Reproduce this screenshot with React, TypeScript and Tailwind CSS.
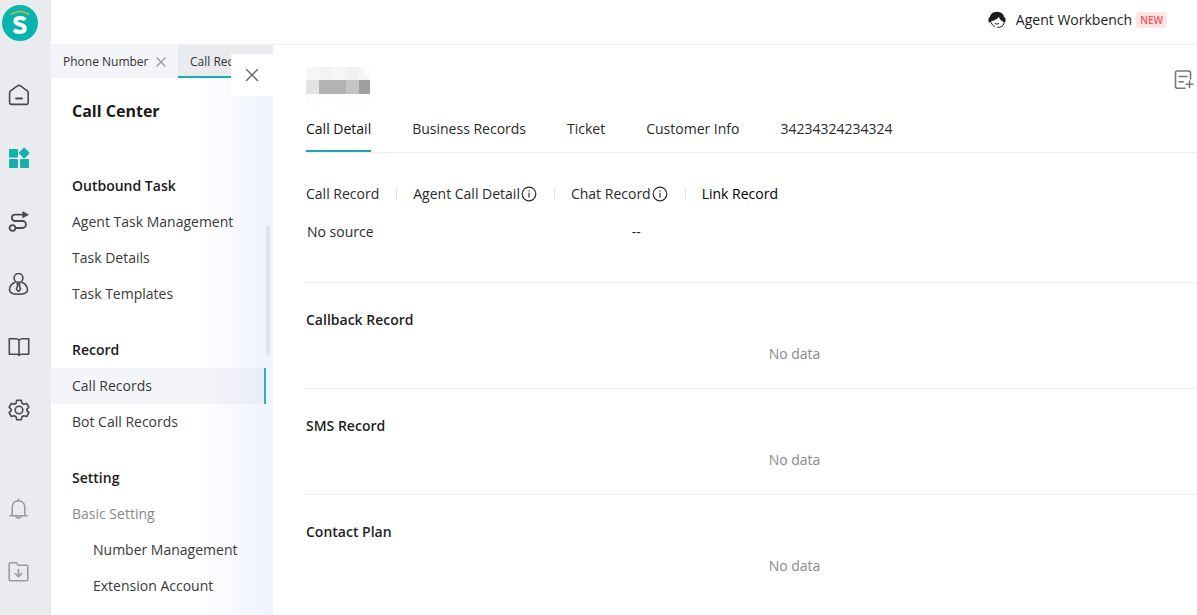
import type { ReactNode } from 'react';
import { X } from 'lucide-react';

const MENU = [
  {
    title: 'Outbound Task',
    items: [{ label: 'Agent Task Management' }, { label: 'Task Details' }, { label: 'Task Templates' }],
  },
  {
    title: 'Record',
    items: [{ label: 'Call Records', active: true }, { label: 'Bot Call Records' }],
  },
  {
    title: 'Setting',
    items: [
      { label: 'Basic Setting', muted: true },
      { label: 'Number Management', nested: true },
      { label: 'Extension Account', nested: true },
    ],
  },
] as { title: string; items: { label: string; active?: boolean; muted?: boolean; nested?: boolean }[] }[];

const TABS = ['Call Detail', 'Business Records', 'Ticket', 'Customer Info', '34234324234324'];

const RECORD_TABS = [
  { label: 'Call Record' },
  { label: 'Agent Call Detail', info: true },
  { label: 'Chat Record', info: true },
  { label: 'Link Record', active: true },
];

const SECTIONS = ['Callback Record', 'SMS Record', 'Contact Plan'];

const Logo = () => (
  <svg width="36" height="36" viewBox="0 0 36 36" aria-hidden="true">
    <circle cx="18" cy="18" r="18" fill="#08b3b0" />
    <path d="M9 9.3Q18 3.500 27 9.3" fill="none" stroke="#a9bf3f" strokeWidth="1.600" strokeLinecap="round" />
    <path
      d="M23.2 14.800C22 13.600 20.200 13 18.200 13C15.500 13 13.400 14 13.400 16.300C13.400 20.600 22.800 18.400 22.800 23.300C22.800 25.800 20.600 27 17.800 27C15.300 27 13.300 26.300 12 25"
      fill="none"
      stroke="#fff"
      strokeWidth="4"
    />
  </svg>
);

const Glyph = ({ children }: { children: ReactNode }) => (
  <svg
    width="22"
    height="22"
    viewBox="0 0 22 22"
    fill="none"
    stroke="currentColor"
    strokeWidth="1.6"
    strokeLinejoin="round"
    strokeLinecap="round"
    aria-hidden="true"
  >
    {children}
  </svg>
);

const HomeIcon = () => (
  <Glyph>
    <path d="M1.600 9Q1.600 7.700 2.600 6.900L9.400 1.900Q11 .9 12.600 1.900L19.200 6.900Q20.200 7.700 20.200 9V18.400Q20.200 20.400 18.200 20.400H3.600Q1.600 20.400 1.600 18.400Z" />
    <path d="M8 14.500H14" strokeWidth="1.800" />
  </Glyph>
);

const AppsIcon = () => (
  <Glyph>
    <g fill="currentColor" stroke="none">
      <rect x="1" y="2" width="9" height="8.500" rx="1" />
      <rect x="1" y="12" width="9" height="9" rx="1" />
      <rect x="12" y="12" width="9" height="9" rx="1" />
      <rect x="12.200" y="2" width="8" height="8" rx="1" transform="rotate(45 16.200 6)" />
    </g>
  </Glyph>
);

const RouteIcon = () => (
  <Glyph>
    <path d="M14 4.700H6.500A3.200 3.200 0 0 0 6.500 11H14.500A3.500 3.500 0 0 1 14.500 18H8.300" strokeWidth="1.800" />
    <circle cx="4.500" cy="18" r="2.900" strokeWidth="1.800" />
    <path d="M15 1.800L20.400 4.700L15 7.600Z" fill="currentColor" strokeWidth=".8" />
  </Glyph>
);

const AgentIcon = () => (
  <Glyph>
    <circle cx="10.500" cy="4.900" r="4.400" />
    <path d="M7 9.300C3.500 11 1.500 14.500 1.500 17C1.500 20 5 21.200 10.500 21.200S19.500 20 19.500 17C19.500 14.500 17.500 11 14 9.300" />
    <path d="M9.200 10.500H11.800L11.300 12.500L12.600 16L10.500 18.500L8.400 16L9.700 12.500Z" />
  </Glyph>
);

const BookIcon = () => (
  <Glyph>
    <path d="M11 4.200C10.200 3.200 9 2.800 7.500 2.800H1.300V18.200H8.500C9.700 18.200 10.500 18.600 11 19.300C11.500 18.600 12.300 18.200 13.500 18.200H20.700V2.800H14.500C13 2.800 11.800 3.200 11 4.200ZM11 4.200V19" />
  </Glyph>
);

const GearIcon = () => (
  <Glyph>
    <path d="M8.800 1.300H13.200L14 4.200L15.800 5.300L18.700 4.500L20.900 8.300L18.800 10.400V11.700L20.900 13.700L18.700 17.500L15.800 16.700L14 17.800L13.200 20.700H8.800L8 17.800L6.200 16.700L3.300 17.500L1.100 13.700L3.200 11.700V10.400L1.100 8.300L3.300 4.500L6.200 5.300L8 4.200Z" />
    <circle cx="11" cy="11" r="3.800" />
  </Glyph>
);

const BellIcon = () => (
  <Glyph>
    <path d="M10.500 1V2.500M4.200 17.500V9A6.300 6.300 0 0 1 16.800 9V17.500M1.800 17.700H19.200M7.800 18.300Q10.500 22 13.200 18.300" />
  </Glyph>
);

const FolderIcon = () => (
  <Glyph>
    <path d="M1.200 3Q1.200 1.800 2.400 1.800H8.500L10.300 4.300H18.600Q19.800 4.300 19.800 5.500V18.500Q19.800 19.700 18.600 19.700H2.400Q1.200 19.700 1.200 18.500Z" />
    <path d="M10.500 8.500V15.500M7.300 12.500L10.500 15.600L13.700 12.500" />
  </Glyph>
);

const NoteIcon = () => (
  <Glyph>
    <path d="M12 19.300H4.500Q2.500 19.300 2.500 17.300V4Q2.500 2 4.500 2H15.500Q17.500 2 17.500 4V10M6 7.500H14M6 12.800H10.500M16.500 12V18.500M13.200 15.200H19.800" />
  </Glyph>
);

const InfoIcon = () => (
  <svg width="16" height="16" viewBox="0 0 16 16" fill="none" stroke="currentColor" strokeWidth="1.200" aria-hidden="true">
    <circle cx="8" cy="8" r="6.800" />
    <path d="M8 6.800V11.500M8 4.300V5.500" />
  </svg>
);

const HeadsetIcon = () => (
  <svg width="18" height="18" viewBox="0 0 18 18" aria-hidden="true">
    <path d="M1.700 9.500C1 4 4.500.8 9 .8S17 4 16.300 9.500L14.500 10C12.500 9.500 11.500 8 11 5.800C9.500 8 6.500 9.500 3.500 10Z" fill="#1c1c1c" />
    <rect x="0.500" y="6.500" width="2.800" height="5" rx="1.200" fill="#1c1c1c" />
    <rect x="14.700" y="6.500" width="2.800" height="5" rx="1.200" fill="#1c1c1c" />
    <path d="M3.200 11.500C4 13.800 5.300 15 7 15.600M9.200 16.400C13 16.600 15.500 15 16.200 12M7 12.500Q9 13.800 11 12.500" fill="none" stroke="#1c1c1c" strokeWidth="1" />
  </svg>
);

const RAIL = [
  { name: 'Home', icon: HomeIcon },
  { name: 'Apps', icon: AppsIcon, active: true },
  { name: 'Routes', icon: RouteIcon },
  { name: 'Agents', icon: AgentIcon },
  { name: 'Knowledge', icon: BookIcon },
  { name: 'Settings', icon: GearIcon },
];

const Rail = () => (
  <nav className="flex w-[51px] shrink-0 flex-col bg-[#e9ebef] pt-[5px] pb-8 pl-2">
    <a href="#" aria-label="Dashboard" className="-ml-[6px]">
      <Logo />
    </a>
    <div className="mt-[43px] flex flex-col items-start gap-[41px] text-[#4a4a4a]">
      {RAIL.map(({ name, icon: Icon, active }) => (
        <button key={name} aria-label={name} className={active ? 'text-[#13b0ae]' : ''}>
          <Icon />
        </button>
      ))}
    </div>
    <div className="mt-auto flex flex-col items-start gap-[41px] text-[#9b9b9b]">
      <button aria-label="Notifications">
        <BellIcon />
      </button>
      <button aria-label="Downloads">
        <FolderIcon />
      </button>
    </div>
  </nav>
);

const Header = () => (
  <header className="flex h-[45px] shrink-0 items-center justify-end border-b border-[#f0f2f5] pr-[30px] pb-[5px]">
    <a href="#" className="flex items-center text-sm text-[#222]">
      <HeadsetIcon />
      <span className="ml-[10px]">Agent Workbench</span>
      <span className="ml-1 rounded-sm bg-[#ffe4e4] px-1 text-[10px] leading-4 font-semibold text-[#f5515b]">NEW</span>
    </a>
  </header>
);

const SideMenu = () => (
  <aside className="relative flex w-[222px] shrink-0 flex-col overflow-hidden bg-linear-to-r from-white from-65% to-[#eff3fe]">
    <div className="flex h-[33px] shrink-0 text-xs text-[#333]">
      <button className="flex w-[127px] shrink-0 items-center gap-1 bg-[#f4f5f8] pl-3">
        Phone Number
        <X size={16} strokeWidth={1.8} className="text-[#999]" />
      </button>
      <button className="flex flex-1 items-center bg-[#e9ebef] pl-3 whitespace-nowrap shadow-[inset_0_-2px_#13b0ae]">Call Records</button>
    </div>
    <h1 className="mt-[21px] pl-[21px] text-base leading-6 font-bold text-[#1a1a1a]">Call Center</h1>
    <nav className="mt-[45px] flex flex-col gap-5 text-sm text-[#3a3a3a]">
      {MENU.map((group) => (
        <div key={group.title}>
          <h2 className="pl-[21px] leading-9 font-semibold text-[#1a1a1a]">{group.title}</h2>
          {group.items.map((item) => (
            <a
              key={item.label}
              href="#"
              className={`mr-[7px] block leading-9 whitespace-nowrap ${item.nested ? 'pl-[42px]' : 'pl-[21px]'} ${
                item.active ? 'border-r-2 border-[#2fb3a8] bg-linear-to-r from-[#f4f5f8] from-65% to-[#ebeef6]' : ''
              } ${item.muted ? 'text-[#8a8a8a]' : ''}`}
            >
              {item.label}
            </a>
          ))}
        </div>
      ))}
    </nav>
    <div className="absolute top-[180px] right-[3px] h-[131px] w-1 rounded-full bg-[#dfe5f0]" />
  </aside>
);

const MaskedNumber = () => (
  <svg width="64" height="38" viewBox="0 0 64 38" aria-hidden="true">
    <rect width="64" height="38" fill="#fdfdfd" />
    <path d="M0 0H58V7H64V13H0Z" fill="#f6f6f6" />
    <rect x="13" width="14" height="13" fill="#f3f3f3" />
    <rect x="40" width="13" height="13" fill="#f1f1f1" />
    <rect y="13" width="13" height="14" fill="#e3e3e1" />
    <rect x="13" y="13" width="27" height="14" fill="#b3b3b3" />
    <rect x="40" y="13" width="13" height="14" fill="#c2c4c6" />
    <rect x="53" y="13" width="11" height="14" fill="#9f9f9f" />
  </svg>
);

const DetailDrawer = () => (
  <main className="relative min-w-0 flex-1 bg-white pl-[33px] text-sm text-[#2b2b2b]">
    <button aria-label="Close" className="absolute top-[9px] -left-[42px] flex size-[42px] items-center justify-center bg-white text-[#666]">
      <X size={22} strokeWidth={1.5} />
    </button>
    <div className="flex items-center justify-between pt-[22px] pr-[2px]">
      <MaskedNumber />
      <button aria-label="Add note" className="mb-3 text-[#777]">
        <NoteIcon />
      </button>
    </div>
    <div className="flex h-12 gap-[41px] border-b border-[#eceef0]">
      {TABS.map((tab, i) => (
        <button
          key={tab}
          className={`flex items-start border-b-2 pt-[14px] whitespace-nowrap ${i === 0 ? 'border-[#1aa9a8] text-[#111]' : 'border-transparent'}`}
        >
          {tab}
        </button>
      ))}
    </div>
    <div className="-mr-[86px]">
      <div className="mt-[31px] flex h-5 items-center">
        {RECORD_TABS.map((tab, i) => (
          <div key={tab.label} className="flex items-center">
            {i > 0 && <span className="mr-4 ml-[17px] h-3 w-px bg-[#e3e5e8]" />}
            <button className={`flex items-center gap-px whitespace-nowrap ${tab.active ? 'text-black' : ''}`}>
              {tab.label}
              {tab.info && <InfoIcon />}
            </button>
          </div>
        ))}
      </div>
      <div className="mt-[18px] grid h-15 grid-cols-3 leading-5">
        <span className="pl-px">No source</span>
        <span>--</span>
      </div>
      {SECTIONS.map((title) => (
        <section key={title} className="border-t border-[#eceef0] pt-[27px] pb-6">
          <h3 className="leading-5 font-semibold text-[#1f1f1f]">{title}</h3>
          <p className="mt-[14px] text-center leading-5 text-[#8a8a8a]">No data</p>
        </section>
      ))}
    </div>
  </main>
);

export default function App() {
  return (
    <div className="flex h-screen overflow-hidden bg-white font-['Open_Sans','Noto_Sans',sans-serif]">
      <Rail />
      <div className="flex min-w-0 flex-1 flex-col">
        <Header />
        <div className="flex min-h-0 flex-1 overflow-hidden">
          <SideMenu />
          <DetailDrawer />
        </div>
      </div>
    </div>
  );
}
